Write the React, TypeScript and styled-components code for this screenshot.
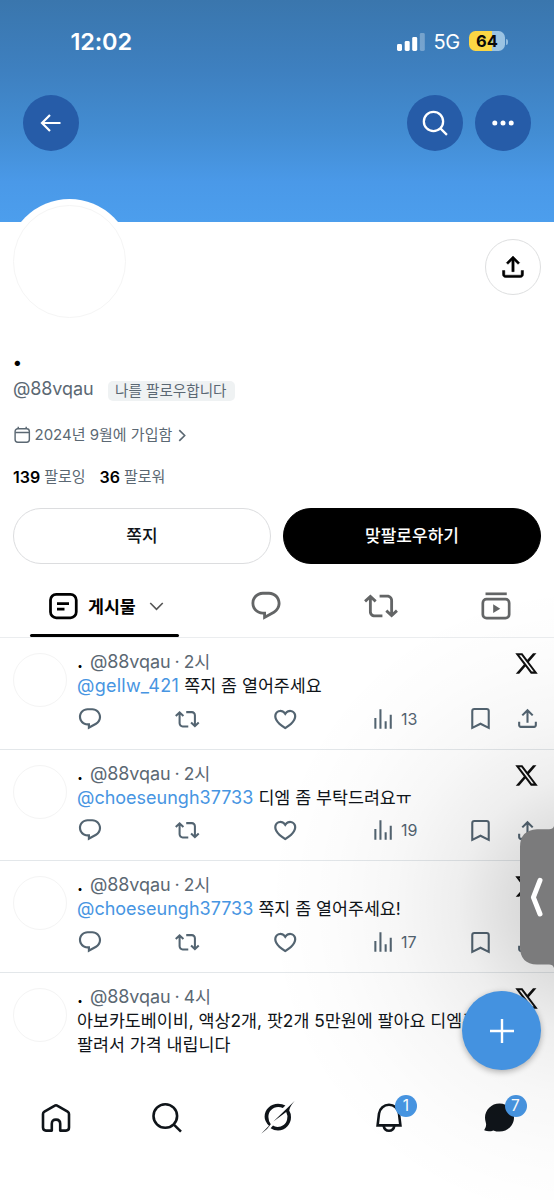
import React from 'react';
import styled, { createGlobalStyle } from 'styled-components';

const ink = '#0f1419';
const slate = '#5b6873';
const blue = '#4795e2';

const GlobalStyle = createGlobalStyle`
  *, *::before, *::after { box-sizing: border-box; }
  body { margin: 0; background: #fff; }
`;

const Screen = styled.div`
  position: relative;
  display: flex;
  flex-direction: column;
  width: 554px;
  height: 1200px;
  overflow: hidden;
  background: #fff;
  color: ${ink};
  font-family: Inter, 'Noto Sans CJK KR', sans-serif;
`;

const T = styled.span<{ $size: number; $weight?: number; $color?: string; $ls?: number; $ml?: number }>`
  margin-left: ${p => p.$ml ?? 0}px;
  font-size: ${p => p.$size}px;
  font-weight: ${p => p.$weight ?? 400};
  color: ${p => p.$color ?? 'inherit'};
  letter-spacing: ${p => p.$ls ?? 0}px;
  white-space: pre;
`;

/* ---------- header ---------- */

const Banner = styled.header`
  flex: none;
  height: 222px;
  background: linear-gradient(#3a76ad 0%, #3e80c0 32%, #438dd3 60%, #4a99e8 82%, #4c9eed 100%);
  color: #fff;
`;

const StatusBar = styled.div`
  display: flex;
  align-items: center;
  height: 83px;
  padding: 0 46px 0 70.5px;
`;

const Clock = styled.div`
  flex: 1;
  font-size: 23.5px;
  font-weight: 600;
  line-height: 30px;
  letter-spacing: -0.15px;
`;

const Network = styled.div`
  margin: 1px 9px 0 9px;
  font-size: 20px;
  line-height: 24px;
  letter-spacing: -0.3px;
`;

const Battery = styled.div`
  width: 36px;
  height: 20px;
  margin-top: -1px;
  border-radius: 6.5px;
  background: linear-gradient(90deg, #fbd644 0 64%, #9bc3e2 64%);
  color: #0a0a0a;
  font-size: 16.5px;
  font-weight: 700;
  line-height: 20.5px;
  text-align: center;
`;

const BatteryTip = styled.div`
  width: 2px;
  height: 6px;
  margin-left: 1px;
  border-radius: 0 2px 2px 0;
  background: #8fbbe0;
`;

const NavButtons = styled.div`
  display: flex;
  align-items: center;
  gap: 12px;
  padding: 11.5px 23px 0 23px;
`;

const RoundButton = styled.button<{ $push?: boolean }>`
  display: grid;
  place-items: center;
  width: 56px;
  height: 56px;
  margin: 0;
  margin-right: ${p => (p.$push ? 'auto' : '0')};
  padding: 0;
  border: 0;
  border-radius: 50%;
  background: #265ca8;
  color: #fff;
`;

/* ---------- profile ---------- */

const Profile = styled.section`
  flex: none;
  height: 354px;
  padding: 0 13px;
`;

const AvatarRow = styled.div`
  display: flex;
  justify-content: space-between;
  height: 128px;
`;

const BigAvatar = styled.div`
  position: relative;
  top: -23px;
  left: -6px;
  width: 125px;
  height: 125px;
  padding: 6px;
  border-radius: 50%;
  background: #fff;
  &::before {
    content: '';
    display: block;
    height: 113px;
    border: 1px solid #f5f5f5;
    border-radius: 50%;
  }
`;

const ShareButton = styled.button`
  display: grid;
  place-items: center;
  width: 56px;
  height: 56px;
  margin-top: 17px;
  padding: 0;
  border: 1px solid #dedfe0;
  border-radius: 50%;
  background: #fff;
  color: #000;
`;

const Name = styled.h1`
  margin: 0;
  height: 26px;
  color: #000;
  font-size: 32px;
  font-weight: 700;
  line-height: 9px;
  text-indent: -1px;
`;

const Line = styled.div<{ $h: number; $color?: string }>`
  display: flex;
  align-items: center;
  height: ${p => p.$h}px;
  color: ${p => p.$color ?? slate};
  line-height: 20px;
`;

const FollowsYou = styled.span`
  display: flex;
  align-items: center;
  width: 127px;
  height: 20px;
  margin: 3px 0 0 14.5px;
  padding-left: 7px;
  border-radius: 5px;
  background: #eff2f3;
`;

const Actions = styled.div`
  display: flex;
  gap: 12px;
  margin-top: 22px;
`;

const Pill = styled.button<{ $dark?: boolean }>`
  flex: 1;
  height: 56px;
  padding: 0;
  border: 1px solid ${p => (p.$dark ? '#000' : '#dcdddf')};
  border-radius: 28px;
  background: ${p => (p.$dark ? '#000' : '#fff')};
  color: ${p => (p.$dark ? '#fff' : ink)};
  font-family: inherit;
  line-height: 24px;
`;

/* ---------- tabs ---------- */

const Tabs = styled.nav`
  display: flex;
  flex: none;
  height: 62px;
  padding-left: 30px;
  border-bottom: 1px solid #ebedef;
  color: #636566;
`;

const Tab = styled.div`
  display: grid;
  flex: none;
  place-items: center;
  width: 115px;
  height: 60px;
`;

const ActiveTab = styled.div`
  position: relative;
  display: flex;
  flex: none;
  align-items: center;
  width: 149px;
  height: 61px;
  margin-right: 29.5px;
  padding: 0 0 2px 18px;
  color: #000;
  &::after {
    content: '';
    position: absolute;
    right: 0;
    bottom: 0;
    left: 0;
    height: 3px;
    border-radius: 1.5px;
    background: #000;
  }
`;

const TabLabel = styled.span`
  width: 61px;
  margin-left: 10px;
  font-size: 17.3px;
  font-weight: 700;
`;

/* ---------- posts ---------- */

const Feed = styled.main`
  flex: none;
  height: 426px;
  overflow: hidden;
`;

const Post = styled.article`
  display: flex;
  height: 111.7px;
  padding: 11px 0 0 13px;
  border-bottom: 1px solid #e3e7ea;
`;

const SmallAvatar = styled.div`
  flex: none;
  width: 54px;
  height: 54px;
  margin: 4px 10px 0 0;
  border: 1px solid #f4f4f4;
  border-radius: 50%;
  background: #fff;
`;

const Body = styled.div`
  flex: 1;
  min-width: 0;
`;

const PostHead = styled.div`
  display: flex;
  align-items: center;
  height: 25px;
  padding-right: 15px;
  line-height: 25px;
`;

const PostLogo = styled.span`
  margin: 4px 0 0 auto;
`;

const PostText = styled.p`
  margin: 0;
  height: 24px;
  line-height: 24px;
  white-space: pre;
`;

const Tools = styled.div`
  display: grid;
  grid-template-columns: 98px 96.5px 98px 98.5px 47px 24px;
  align-items: center;
  height: 26px;
  margin-top: 7.5px;
  color: #536471;
`;

const Metric = styled.span`
  display: flex;
  align-items: center;
  gap: 5.5px;
  line-height: 20px;
`;

/* ---------- bottom bar & overlays ---------- */

const BottomBar = styled.nav`
  display: flex;
  flex: 1;
  align-items: flex-start;
  padding-top: 34.5px;
`;

const BottomItem = styled.div<{ $w: number }>`
  display: grid;
  justify-items: center;
  width: ${p => p.$w}px;
`;

const Anchor = styled.span`
  position: relative;
  display: block;
  height: 44px;
`;

const Badge = styled.span<{ $left: number }>`
  position: absolute;
  top: -3.5px;
  left: ${p => p.$left}px;
  width: 22px;
  height: 22px;
  border-radius: 50%;
  background: ${blue};
  color: #fff;
  font-size: 15.5px;
  line-height: 22px;
  text-align: center;
`;

const Compose = styled.button`
  position: absolute;
  z-index: 3;
  right: 13px;
  top: 991px;
  display: grid;
  place-items: center;
  width: 79px;
  height: 79px;
  padding: 0;
  border: 0;
  border-radius: 50%;
  background: #4492e0;
  box-shadow: 0 2px 6px rgba(0, 0, 0, 0.3);
  color: #fff;
`;

const EdgeShade = styled.div`
  position: absolute;
  z-index: 2;
  inset: 560px 0 0 220px;
  background: radial-gradient(ellipse 320px 320px at 366px 345px, rgba(0, 0, 0, 0.22), rgba(0, 0, 0, 0.125) 25%, rgba(0, 0, 0, 0.068) 40%, rgba(0, 0, 0, 0.032) 60%, rgba(0, 0, 0, 0.012) 80%, rgba(0, 0, 0, 0));
  pointer-events: none;
`;

const EdgeHandle = styled.div`
  position: absolute;
  z-index: 4;
  right: 0;
  top: 826px;
  width: 34px;
  height: 142px;
`;

/* ---------- icons ---------- */

type IconProps = { size: number; children: React.ReactNode; stroke?: number };
const Svg = styled.svg`
  display: block;
  flex: none;
  overflow: visible;
`;
const Icon = ({ size, children, stroke }: IconProps) => (
  <Svg
    width={size}
    height={size}
    viewBox="0 0 24 24"
    fill={stroke ? 'none' : 'currentColor'}
    stroke={stroke ? 'currentColor' : 'none'}
    strokeWidth={stroke}
  >
    {children}
  </Svg>
);

const ReplyPath = () => (
  <path d="M1.751 10c0-4.42 3.584-8 8.005-8h4.366c4.49 0 8.129 3.64 8.129 8.13 0 2.96-1.607 5.68-4.196 7.11l-8.054 4.46v-3.69h-.067c-4.49.1-8.183-3.51-8.183-8.01zm8.005-6c-3.317 0-6.005 2.69-6.005 6 0 3.37 2.77 6.08 6.138 6.01l.351-.01h1.761v2.3l5.087-2.81c1.951-1.08 3.163-3.13 3.163-5.36 0-3.39-2.744-6.13-6.129-6.13H9.756z" />
);
const RepostPath = () => (
  <path d="M4.5 3.88l4.432 4.14-1.364 1.46L5.5 7.55V16c0 1.1.896 2 2 2H13v2H7.5c-2.209 0-4-1.79-4-4V7.55L1.432 9.48.068 8.02 4.5 3.88zM16.5 6H11V4h5.5c2.209 0 4 1.79 4 4v8.45l2.068-1.93 1.364 1.46-4.432 4.14-4.432-4.14 1.364-1.46 2.068 1.93V8c0-1.1-.896-2-2-2z" />
);
const LikePath = () => (
  <path d="M16.697 5.5c-1.222-.06-2.679.51-3.89 2.16l-.805 1.09-.806-1.09C9.984 6.01 8.526 5.44 7.304 5.5c-1.243.07-2.349.78-2.91 1.91-.552 1.12-.633 2.78.479 4.82 1.074 1.97 3.257 4.27 7.129 6.61 3.87-2.34 6.052-4.64 7.126-6.61 1.111-2.04 1.03-3.7.477-4.82-.561-1.13-1.666-1.84-2.908-1.91zm4.187 7.69c-1.351 2.48-4.001 5.12-8.379 7.67l-.503.3-.504-.3c-4.379-2.55-7.029-5.19-8.382-7.67-1.36-2.5-1.41-4.86-.514-6.67.887-1.79 2.647-2.91 4.601-3.01 1.651-.09 3.368.56 4.798 2.01 1.429-1.45 3.146-2.1 4.796-2.01 1.954.1 3.714 1.22 4.601 3.01.896 1.81.846 4.17-.514 6.67z" />
);
const ViewsPath = () => (
  <path d="M8.7 21V3h1.9v18H8.7zM18.2 21V8h1.9V21h-1.9zM4 21V11h1.9V21H4zm9.5 0v-7h1.9v7h-1.9z" />
);
const SharePath = () => (
  <path d="M12 2.59l5.7 5.7-1.41 1.42L13 6.41V16h-2V6.41l-3.3 3.3-1.41-1.42L12 2.59zM21 15l-.02 3.51c0 1.38-1.12 2.49-2.5 2.49H5.5C4.11 21 3 19.88 3 18.5V15h2v3.5c0 .28.22.5.5.5h12.98c.28 0 .5-.22.5-.5L19 15h2z" />
);
const XPath = () => (
  <path d="M18.244 2.25h3.308l-7.227 8.26 8.502 11.24H16.17l-5.214-6.817L4.99 21.75H1.68l7.73-8.835L1.254 2.25H8.08l4.713 6.231zm-1.161 17.52h1.833L7.084 4.126H5.117z" />
);

/* ---------- content ---------- */

type PostData = { age: string; mention?: string; spacing?: number; lines: string[]; views?: string };
const posts: PostData[] = [
  { age: '2시', mention: '@gellw_421', spacing: 0.25, lines: ['쪽지 좀 열어주세요'], views: '13' },
  { age: '2시', mention: '@choeseungh37733', lines: ['디엠 좀 부탁드려요ㅠ'], views: '19' },
  { age: '2시', mention: '@choeseungh37733', lines: ['쪽지 좀 열어주세요!'], views: '17' },
  { age: '4시', lines: ['아보카도베이비, 액상2개, 팟2개 5만원에 팔아요 디엠주', '팔려서 가격 내립니다'] },
];

const PostItem = ({ post }: { post: PostData }) => (
  <Post>
    <SmallAvatar />
    <Body>
      <PostHead>
        <T $size={18} $weight={700} $color="#000">.</T>
        <T $size={18} $color={slate} $ml={7} $ls={-0.1}>@88vqau</T>
        <T $size={18} $color={slate} $ml={4}>·</T>
        <T $size={17.4} $color={slate} $ml={4}>{post.age}</T>
        <PostLogo><Icon size={25}><g fill="#0f0f0f"><XPath /></g></Icon></PostLogo>
      </PostHead>
      {post.lines.map((line, i) => (
        <PostText key={line}>
          {i === 0 && post.mention && (
            <T $size={18} $color={blue} $ls={post.spacing}>{`${post.mention} `}</T>
          )}
          <T $size={17.35}>{line}</T>
        </PostText>
      ))}
      {post.views && (
        <Tools>
          <Icon size={26}><ReplyPath /></Icon>
          <Icon size={24.5}><RepostPath /></Icon>
          <Icon size={26.5}><LikePath /></Icon>
          <Metric>
            <Icon size={26}><ViewsPath /></Icon>
            <T $size={16}>{post.views}</T>
          </Metric>
          <Icon size={25} stroke={2}>
            <path d="M4.1 21V4.8q0-2 2-2h11.8q2 0 2 2V21L12 17z" />
          </Icon>
          <Icon size={25}><SharePath /></Icon>
        </Tools>
      )}
    </Body>
  </Post>
);

export default function App() {
  return (
    <Screen>
      <GlobalStyle />
      <Banner>
        <StatusBar>
          <Clock>12:02</Clock>
          <svg width="28" height="18" viewBox="0 0 28 18" fill="#fff">
            <rect x="0" y="11" width="5" height="7" rx="1.4" />
            <rect x="7.7" y="8" width="5" height="10" rx="1.4" />
            <rect x="15.2" y="4" width="5" height="14" rx="1.4" />
            <rect x="22.8" y="0" width="5" height="18" rx="1.4" opacity="0.3" />
          </svg>
          <Network>5G</Network>
          <Battery>64</Battery>
          <BatteryTip />
        </StatusBar>
        <NavButtons>
          <RoundButton $push>
            <Icon size={24} stroke={2.2}>
              <path d="M21.5 12H3M11 4l-8 8 8 8" />
            </Icon>
          </RoundButton>
          <RoundButton>
            <Icon size={26} stroke={2.1}>
              <circle cx="10.6" cy="10.6" r="8.9" />
              <path d="M17 17l6 6" />
            </Icon>
          </RoundButton>
          <RoundButton>
            <Icon size={24}>
              <circle cx="3.8" cy="12" r="2.5" />
              <circle cx="12" cy="12" r="2.5" />
              <circle cx="20.2" cy="12" r="2.5" />
            </Icon>
          </RoundButton>
        </NavButtons>
      </Banner>

      <Profile>
        <AvatarRow>
          <BigAvatar />
          <ShareButton>
            <Icon size={28}><g stroke="#000" strokeWidth="0.4"><SharePath /></g></Icon>
          </ShareButton>
        </AvatarRow>
        <Name>.</Name>
        <Line $h={26}>
          <T $size={18} $ls={-0.1}>@88vqau</T>
          <FollowsYou><T $size={14.6}>나를 팔로우합니다</T></FollowsYou>
        </Line>
        <Line $h={66}>
          <Icon size={18} stroke={1.9}>
            <rect x="2.8" y="3.6" width="19" height="18" rx="3.6" />
            <path d="M3 8.6h18.6M7 1v3M17.6 1v3" />
          </Icon>
          <T $size={15} $ml={3.5}>2024년 9월에 가입함</T>
          <T $size={15} $ml={4} />
          <Icon size={13} stroke={3}><path d="M6 2l10 10L6 22" /></Icon>
        </Line>
        <Line $h={18}>
          <T $size={16} $weight={600} $color="#000">139</T>
          <T $size={15} $ml={4}>팔로잉</T>
          <T $size={16} $weight={600} $color="#000" $ml={14}>36</T>
          <T $size={15} $ml={4}>팔로워</T>
        </Line>
        <Actions>
          <Pill><T $size={17} $weight={500}>쪽지</T></Pill>
          <Pill $dark><T $size={17} $weight={500}>맞팔로우하기</T></Pill>
        </Actions>
      </Profile>

      <Tabs>
        <ActiveTab>
          <Icon size={30} stroke={2.2}>
            <rect x="2" y="2.6" width="20.6" height="18.8" rx="4.6" />
            <path d="M7.2 10h9.6M7.2 14.4h6" />
          </Icon>
          <TabLabel>게시물</TabLabel>
          <Icon size={15} stroke={2.6}><path d="M2 8l10 10L22 8" stroke="#555" /></Icon>
        </ActiveTab>
        <Tab><Icon size={34}><ReplyPath /></Icon></Tab>
        <Tab><Icon size={34}><RepostPath /></Icon></Tab>
        <Tab>
          <Icon size={34} stroke={1.9}>
            <rect x="2.7" y="7.2" width="18.6" height="13.4" rx="2.6" />
            <path d="M4.6 3.4h15" />
            <path d="M10 10.8v6.2l5-3.1z" fill="currentColor" stroke="none" />
          </Icon>
        </Tab>
      </Tabs>

      <Feed>
        {posts.map((post, i) => <PostItem key={i} post={post} />)}
      </Feed>

      <BottomBar>
        <BottomItem $w={111}>
          <Anchor>
            <svg width="32" height="36" viewBox="0 0 32 36" fill="none" stroke={ink} strokeWidth="2.6" strokeLinejoin="round">
              <path d="M16 6.3Q16.7 6.3 17.6 6.9L27.6 12.6Q29 13.4 29 15V28.6Q29 31.6 26 31.6H20.2V24.8Q20.2 20.6 16 20.6T11.8 24.8V31.6H6Q3 31.6 3 28.6V15Q3 13.4 4.4 12.6L14.4 6.9Q15.3 6.3 16 6.3Z" />
            </svg>
          </Anchor>
        </BottomItem>
        <BottomItem $w={111}>
          <Anchor>
            <svg width="32" height="36" viewBox="0 0 32 36" fill="none" stroke={ink} strokeWidth="2.6">
              <circle cx="14.3" cy="17" r="11.8" />
              <path d="M22.6 25.4L30 32.6" />
            </svg>
          </Anchor>
        </BottomItem>
        <BottomItem $w={111}>
          <Anchor>
            <svg width="36" height="36" viewBox="0 0 36 36" fill={ink}>
              <path d="M1.2 34.8L9 26.8Q4.6 22.4 4.6 17.8C4.6 10.2 11 4.8 18 4.8Q22.4 4.8 25.4 6.6L22.8 8.9Q20.6 8 18.2 8C12.6 8 8.4 12.4 8.4 18Q8.4 22.2 10.8 25.2Q7.6 30.4 1.2 34.8Z" />
              <path d="M34.8 1.8L13.4 22.4L26.2 13Q28 16.4 27.1 20.4C26 25.2 21.8 28 17.4 27.9Q14.8 27.8 13 26.6L10.6 29.2Q14 31.4 18 31.4C25.4 31.4 31 25.4 31 18.2Q31 14.2 29.2 11.4Q29.6 7.8 34.8 1.8Z" />
            </svg>
          </Anchor>
        </BottomItem>
        <BottomItem $w={111}>
          <Anchor>
            <svg width="32" height="36" viewBox="0 0 32 36" fill="none" stroke={ink} strokeWidth="2.6">
              <path d="M4.6 26.4L6 14.6C6.8 9.2 11 5.8 16 5.8S25.2 9.2 26 14.6L27.4 26.4Z" />
              <path d="M10.6 26.8C11.2 30 13.2 31.8 16 31.8S20.8 30 21.4 26.8" />
            </svg>
            <Badge $left={22.5}>1</Badge>
          </Anchor>
        </BottomItem>
        <BottomItem $w={109}>
          <Anchor>
            <svg width="32" height="36" viewBox="0 0 32 36" fill={ink}>
              <path d="M16.5 4.4C24.6 4.4 31 10.8 31 18.6S24.6 32.6 16.6 32.6Q13.2 32.6 10.4 31.4Q6 33.2 1.8 31.6Q1 31.2 1.5 30.4Q3.6 27.8 3 24.4Q2 21.6 2 18.6C2 10.8 8.4 4.4 16.5 4.4Z" />
            </svg>
            <Badge $left={22}>7</Badge>
          </Anchor>
        </BottomItem>
      </BottomBar>

      <EdgeShade />
      <Compose>
        <Icon size={24} stroke={2.4}><path d="M12 0v24M0 12h24" /></Icon>
      </Compose>
      <EdgeHandle>
        <Svg width="34" height="142" viewBox="0 0 34 142">
          <path d="M34 0Q33 3.2 29 3.2H17Q0 4 0 21V121Q0 138 17 138.6H29Q33 138.6 34 142Z" fill="#7b7b7c" />
          <path d="M20 54.4L13.4 71.4L20 88" fill="none" stroke="#fff" strokeWidth="5" strokeLinecap="round" strokeLinejoin="round" />
        </Svg>
      </EdgeHandle>
    </Screen>
  );
}
